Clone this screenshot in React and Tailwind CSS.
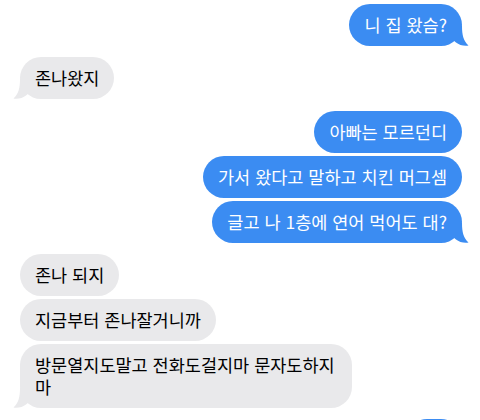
import React from 'react';

// Chat log, top to bottom. `tail` marks the last bubble of a run.
const messages = [
  { id: 1, me: true, text: '니 집 왔슴?', tail: true, gap: 'mt-[4px]' },
  { id: 2, me: false, text: '존나왔지', tail: true, gap: 'mt-[11px]' },
  { id: 3, me: true, text: '아빠는 모르던디', gap: 'mt-[12px]' },
  { id: 4, me: true, text: '가서 왔다고 말하고 치킨 머그셈', gap: 'mt-[3px]' },
  { id: 5, me: true, text: '글고 나 1층에 연어 먹어도 대?', tail: true, gap: 'mt-[3px]' },
  { id: 6, me: false, text: '존나 되지', gap: 'mt-[11px]' },
  { id: 7, me: false, text: '지금부터 존나잘거니까', gap: 'mt-[3px]' },
  { id: 8, me: false, text: '방문열지도말고 전화도걸지마 문자도하지마', tail: true, gap: 'mt-[3px]' },
];

function Tail({ me }) {
  if (me) {
    return (
      <svg className="absolute bottom-0 -right-[7px] w-[16px] h-[20px]" viewBox="0 0 16 20">
        <path d="M0 0 H9 C9 9 10.5 15 15.5 19.6 C11 20.4 6 19 3 16.5 L0 14 Z" fill="#3b8cf2" />
      </svg>
    );
  }
  return (
    <svg className="absolute bottom-0 -left-[7px] w-[16px] h-[20px]" viewBox="0 0 16 20">
      <path d="M16 0 H7 C7 9 5.5 15 0.5 19.6 C5 20.4 10 19 13 16.5 L16 14 Z" fill="#e9e9eb" />
    </svg>
  );
}

function Bubble({ msg }) {
  const color = msg.me ? 'bg-[#3b8cf2] text-white' : 'bg-[#e9e9eb] text-black';
  return (
    <div className={`flex ${msg.me ? 'justify-end pr-[18px]' : 'justify-start pl-[20px]'} ${msg.gap}`}>
      <div className={`relative max-w-[332px] rounded-[21px] px-[15px] py-[10px] text-[17.5px] leading-[22px] [word-spacing:1px] ${color}`}>
        {msg.tail && <Tail me={msg.me} />}
        <span className="relative">{msg.text}</span>
      </div>
    </div>
  );
}

export default function App() {
  return (
    <div
      className="w-[480px] h-[420px] overflow-hidden bg-white flex flex-col"
      style={{ fontFamily: '"Noto Sans CJK KR", "Noto Sans", sans-serif' }}
    >
      {messages.map(m => <Bubble key={m.id} msg={m} />)}
      {/* next bubble, cut off at the bottom edge */}
      <div className="flex justify-end pr-[18px] mt-[11px]">
        <div className="w-[56px] h-[42px] rounded-[21px] bg-[#3b8cf2] shrink-0" />
      </div>
    </div>
  );
}
